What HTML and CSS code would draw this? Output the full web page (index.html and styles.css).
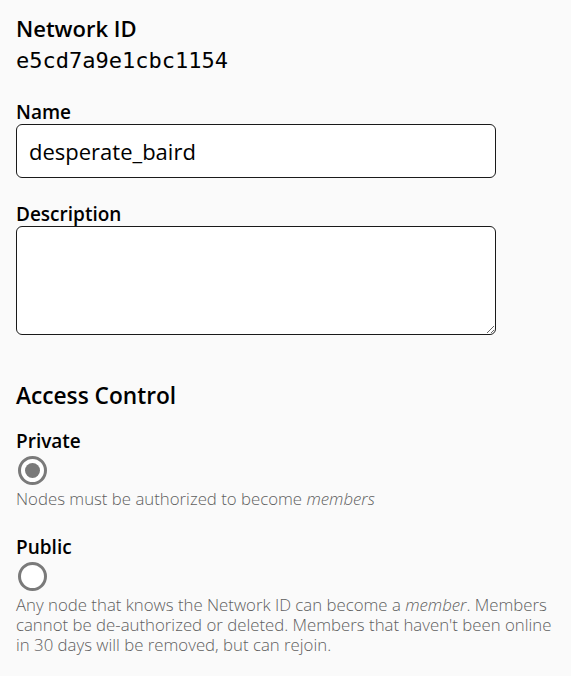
FILE: index.html
```html
<!DOCTYPE html>
<html lang="en">
<head>
<meta charset="utf-8">
<title>Network settings</title>
<link rel="stylesheet" href="styles.css">
</head>
<body>
<main class="form">
  <section class="netid-block">
    <h2 class="title">Network ID</h2>
    <code class="netid">e5cd7a9e1cbc1154</code>
  </section>

  <label class="field field-name">
    <span class="label">Name</span>
    <input class="input" type="text" value="desperate_baird">
  </label>

  <label class="field field-desc">
    <span class="label">Description</span>
    <textarea class="textarea"></textarea>
  </label>

  <section class="access">
    <h2 class="section-title">Access Control</h2>
    <div class="option option-private">
      <span class="label">Private</span>
      <input class="radio" type="radio" name="access" checked>
      <p class="help">Nodes must be authorized to become <em>members</em></p>
    </div>
    <div class="option option-public">
      <span class="label">Public</span>
      <input class="radio" type="radio" name="access">
      <p class="help">Any node that knows the Network ID can become a <em>member</em>. Members cannot be de-authorized or deleted. Members that haven't been online in 30 days will be removed, but can rejoin.</p>
    </div>
  </section>
</main>
</body>
</html>
```

FILE: styles.css
```css
html, body {
  margin: 0;
  padding: 0;
  background: #fafafa;
}
body {
  font-family: "Open Sans", "Noto Sans", sans-serif;
  color: #000;
}
.form {
  padding: 14px 16px 0 16px;
  display: flex;
  flex-direction: column;
}
.title {
  margin: 0;
  font-size: 22px;
  line-height: 28px;
  font-weight: 600;
}
.netid {
  display: block;
  margin-top: 4px;
  font-family: "DejaVu Sans Mono", monospace;
  font-size: 22px;
  line-height: 30px;
}
.field {
  display: flex;
  flex-direction: column;
  width: 480px;
}
.field-name { margin-top: 25px; }
.field-desc { margin-top: 25px; }
.label {
  font-size: 19px;
  line-height: 23px;
  font-weight: 600;
  display: block;
}
.input {
  box-sizing: border-box;
  height: 54px;
  margin: 0;
  padding: 0 12px;
  border: 1px solid #1a1a1a;
  border-radius: 6px;
  background: #fff;
  font-family: inherit;
  font-size: 22px;
  color: #000;
  outline: none;
}
.textarea {
  box-sizing: border-box;
  height: 109px;
  margin: 0;
  border: 1px solid #1a1a1a;
  border-radius: 6px;
  background: #fff;
  resize: vertical;
  outline: none;
}
.access { margin-top: 46px; }
.section-title {
  margin: 0;
  font-size: 22.7px;
  line-height: 30px;
  font-weight: 600;
}
.option-private { margin-top: 19px; }
.option-public { margin-top: 27px; }
.radio {
  appearance: none;
  -webkit-appearance: none;
  display: block;
  box-sizing: border-box;
  width: 29px;
  height: 29px;
  margin: 3px 0 4px 2px;
  border: 3px solid #7a7a7a;
  border-radius: 50%;
  background: #fff;
  position: relative;
}
.radio:checked::after {
  content: "";
  position: absolute;
  left: 4px;
  top: 4px;
  width: 15px;
  height: 15px;
  border-radius: 50%;
  background: #7a7a7a;
}
.help {
  margin: 0;
  font-size: 16.8px;
  line-height: 20px;
  font-weight: 300;
  color: #5f5f5f;
}
```
